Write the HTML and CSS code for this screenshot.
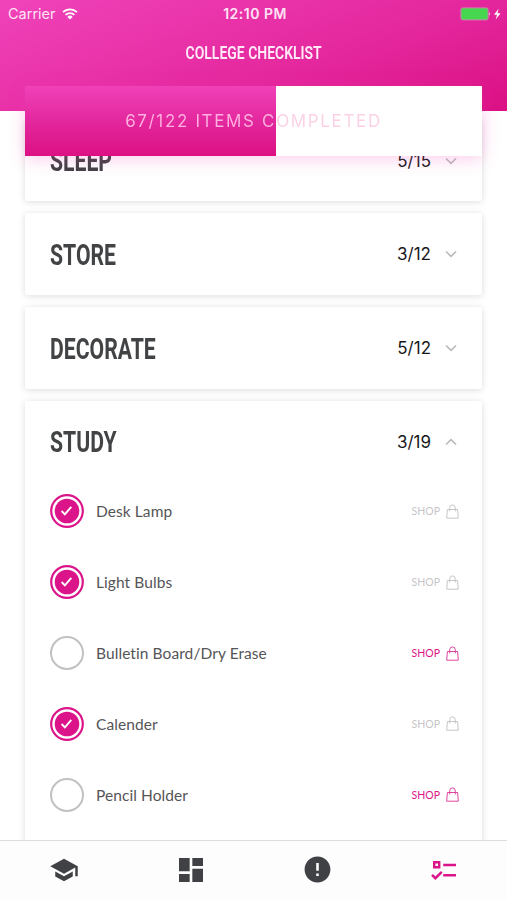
FILE: index.html
```html
<!DOCTYPE html>
<html lang="en">
<head>
    <meta charset="UTF-8">
    <meta name="viewport" content="width=device-width, initial-scale=1">
    <title>College Checklist</title>
    <link rel="stylesheet" href="styles.css">
</head>
<body>

    <!-- shared icons -->
    <svg class="sprite" width="0" height="0">
        <symbol id="chevron" viewBox="0 0 12 8">
            <path d="M1 1.5 6 6.3 11 1.5" fill="none" stroke="currentColor" stroke-width="1.6"/>
        </symbol>
        <symbol id="check" viewBox="0 0 34 34">
            <circle cx="17" cy="17" r="15.8" fill="#fff" stroke="#dc1489" stroke-width="2.2"/>
            <circle cx="17" cy="17" r="12.3" fill="#dc1489"/>
            <path d="M11.6 17 14.9 20.3 21.3 12.8" fill="none" stroke="#fff" stroke-width="1.9"/>
        </symbol>
        <symbol id="bag" viewBox="0 0 13 15">
            <path d="M1.4 5.5H11.6L12.3 14.2H.7ZM3.7 7.4V3.8a2.8 2.9 0 0 1 5.6 0V7.4" fill="none" stroke="currentColor" stroke-width="1"/>
        </symbol>
    </svg>

    <div class="app">
        <header class="header">
            <div class="status">
                <div class="carrier">
                    Carrier
                    <svg width="16" height="12" viewBox="0 0 16 12" fill="none" stroke="#fff" stroke-width="1.7">
                        <path d="M1 4.2a10 10 0 0 1 14 0M3.6 6.9a6.2 6.2 0 0 1 8.8 0"/>
                        <path d="M8 11.5 5.4 8.9a3.7 3.7 0 0 1 5.2 0Z" fill="#fff" stroke="none"/>
                    </svg>
                </div>
                <div class="time">12:10 PM</div>
                <div class="battery">
                    <svg width="42" height="14" viewBox="0 0 42 14">
                        <rect x=".9" y=".9" width="27.2" height="12" rx="1.8" fill="#46d64f" stroke="#d283ae" stroke-width="1"/>
                        <path d="M29.2 4.9q1.6 2 0 4Z" fill="#fff"/>
                        <path d="M38.6 1.8 34 7.7H37L35.7 12.4 40.6 6.3H37.5Z" fill="#fff"/>
                    </svg>
                </div>
            </div>
            <h1 class="title"><span>COLLEGE CHECKLIST</span></h1>
            <div class="progress">
                <div class="progress-text">67/122 ITEMS COMPLETED</div>
            </div>
        </header>

        <main class="list">
            <section class="card">
                <div class="card-head">
                    <h2>SLEEP</h2>
                    <span class="count">5/15</span>
                    <svg class="chevron"><use href="#chevron"/></svg>
                </div>
            </section>
            <section class="card">
                <div class="card-head">
                    <h2>STORE</h2>
                    <span class="count">3/12</span>
                    <svg class="chevron"><use href="#chevron"/></svg>
                </div>
            </section>
            <section class="card">
                <div class="card-head">
                    <h2>DECORATE</h2>
                    <span class="count">5/12</span>
                    <svg class="chevron"><use href="#chevron"/></svg>
                </div>
            </section>
            <section class="card open">
                <div class="card-head">
                    <h2>STUDY</h2>
                    <span class="count">3/19</span>
                    <svg class="chevron"><use href="#chevron"/></svg>
                </div>
                <ul class="items">
                    <li class="item done">
                        <svg class="tick"><use href="#check"/></svg>
                        <span class="name">Desk Lamp</span>
                        <span class="shop">SHOP</span><svg class="bag"><use href="#bag"/></svg>
                    </li>
                    <li class="item done">
                        <svg class="tick"><use href="#check"/></svg>
                        <span class="name">Light Bulbs</span>
                        <span class="shop">SHOP</span><svg class="bag"><use href="#bag"/></svg>
                    </li>
                    <li class="item">
                        <span class="tick empty"></span>
                        <span class="name">Bulletin Board/Dry Erase</span>
                        <span class="shop">SHOP</span><svg class="bag"><use href="#bag"/></svg>
                    </li>
                    <li class="item done">
                        <svg class="tick"><use href="#check"/></svg>
                        <span class="name">Calender</span>
                        <span class="shop">SHOP</span><svg class="bag"><use href="#bag"/></svg>
                    </li>
                    <li class="item">
                        <span class="tick empty"></span>
                        <span class="name">Pencil Holder</span>
                        <span class="shop">SHOP</span><svg class="bag"><use href="#bag"/></svg>
                    </li>
                </ul>
            </section>
        </main>

        <nav class="tabs">
            <a class="tab">
                <svg width="30" height="30" viewBox="0 0 24 24"><path d="M5 13.18v4L12 21l7-3.82v-4L12 17l-7-3.82zM12 3 1 9l11 6 9-4.91V17h2V9L12 3z"/></svg>
            </a>
            <a class="tab">
                <svg width="32" height="32" viewBox="0 0 24 24"><path d="M3 13h8V3H3v10zm0 8h8v-6H3v6zm10 0h8V11h-8v10zm0-18v6h8V3h-8z"/></svg>
            </a>
            <a class="tab">
                <svg width="31" height="31" viewBox="0 0 24 24"><path d="M12 2C6.48 2 2 6.48 2 12s4.48 10 10 10 10-4.48 10-10S17.52 2 12 2zm1 15h-2v-2h2v2zm0-4h-2V7h2v6z"/></svg>
            </a>
            <a class="tab active">
                <svg width="26" height="20" viewBox="0 0 26 20">
                    <path d="M3.2 2.2H8.2V7.2H3.2ZM12.2 5H25M12.2 15.2H25M1 14.8 4.4 18.2 10.8 11.8"/>
                </svg>
            </a>
        </nav>
    </div>

</body>
</html>
```
FILE: styles.css
```css
* {
    box-sizing: border-box;
}
body {
    margin: 0;
    background: #fff;
    font-family: Lato, sans-serif;
    color: #414345;
}
.sprite {
    position: absolute;
}
.app {
    display: flex;
    flex-direction: column;
    height: 900px;
    overflow: hidden;
}

/* header */
.header {
    position: relative;
    z-index: 1;
    flex: none;
    height: 111px;
    padding: 0 25px;
    background: linear-gradient(160deg, #f043ba 0%, #e4269c 62%, #db1084 100%);
    color: #fff;
}
.status {
    display: grid;
    grid-template-columns: 1fr auto 1fr;
    align-items: center;
    height: 27px;
    margin: 0 -20px 0 -17px;
    font: 14.5px Inter, sans-serif;
    color: #ffe3f5;
}
.carrier {
    display: flex;
    align-items: center;
    gap: 6px;
}
.time {
    font-weight: 600;
    font-size: 14px;
    letter-spacing: 0.5px;
}
.battery {
    display: flex;
    justify-content: flex-end;
}
.title {
    height: 59px;
    margin: 0;
    padding-top: 14px;
    font: 600 19px/24px Roboto, sans-serif;
    text-align: center;
    color: #ffe9f7;
}
.title span {
    display: inline-block;
    margin: 0 -30px;
    transform: scaleX(0.735);
}
.progress {
    height: 70px;
    background: linear-gradient(#f041b8, #e2259b 55%, #dc1084) 0 0 / 251px 100% no-repeat #fff;
    box-shadow: 0 3px 16px rgba(240, 60, 180, 0.25);
    text-align: center;
}
.progress-text {
    font: 17px/71px Inter, sans-serif;
    letter-spacing: 1.65px;
    background: linear-gradient(90deg, #ffb2e1 251px, #fbd0e5 251px);
    -webkit-background-clip: text;
    background-clip: text;
    color: transparent;
}

/* checklist */
.list {
    flex: 1;
    min-height: 0;
    padding: 8.8px 25px 0;
    overflow: hidden;
}
.card {
    height: 81.7px;
    margin-bottom: 12px;
    padding: 0 23px 0 25px;
    border-radius: 2px;
    background: #fff;
    box-shadow: 0 1px 7px rgba(0, 0, 0, 0.14);
}
.card.open {
    height: 700px;
}
.card-head {
    display: flex;
    align-items: center;
    height: 81.7px;
}
.card h2 {
    margin: 0 auto 0 0;
    font: 700 30px Roboto, sans-serif;
    transform: scaleX(0.706);
    transform-origin: left;
}
.count {
    font: 17px Inter, sans-serif;
    color: #18181a;
}
.chevron {
    width: 12px;
    height: 8px;
    margin: 0 2px 0 14px;
    color: #b9b9bb;
}
.open .chevron {
    transform: rotate(180deg);
}
.items {
    margin: -6.7px 0 0;
    padding: 0;
    list-style: none;
}
.item {
    display: flex;
    align-items: center;
    height: 70.9px;
}
.tick {
    width: 34px;
    height: 34px;
    margin-right: 12px;
}
.empty {
    border: 2px solid #c1c1c3;
    border-radius: 50%;
}
.name {
    flex: 1;
    font-size: 15.5px;
    letter-spacing: 0.08px;
    color: #555557;
}
.shop {
    font-size: 10.5px;
    color: #dc1489;
}
.bag {
    width: 13px;
    height: 15px;
    margin-left: 6px;
    color: #e0449f;
}
.done .shop,
.done .bag {
    color: #c6c6c8;
}

/* bottom tabs */
.tabs {
    display: grid;
    grid-template-columns: repeat(4, 1fr);
    flex: none;
    height: 60px;
    border-top: 1px solid #dcdcdc;
    background: #fdfdfd;
}
.tab {
    display: flex;
    align-items: center;
    justify-content: center;
    padding: 0 0 2px 1px;
    color: #3f4145;
}
.tab svg {
    fill: currentColor;
}
.tab.active {
    padding: 0 0 2px;
    color: #dc1489;
}
.tab.active svg {
    fill: none;
    stroke: currentColor;
    stroke-width: 2.4;
}
```
